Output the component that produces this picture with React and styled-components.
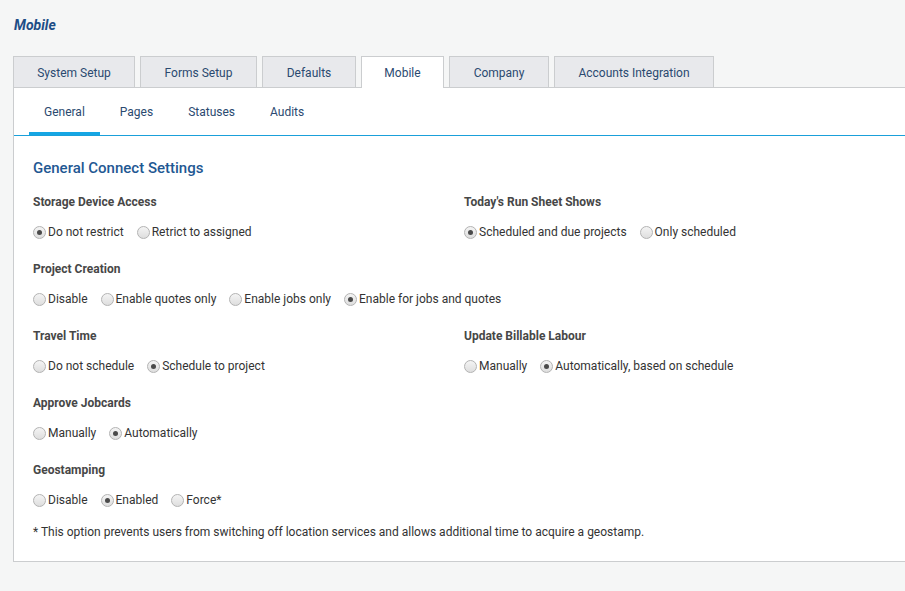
import styled, { createGlobalStyle } from "styled-components";

const Global = createGlobalStyle`
  html, body {
    margin: 0;
    padding: 0;
    background: #f5f6f6;
    font-family: Roboto, "Liberation Sans", sans-serif;
    overflow: hidden;
  }
`;

const Page = styled.div`
  width: 905px;
  height: 591px;
  padding-left: 13px;
  box-sizing: border-box;
`;

const Title = styled.h1`
  margin: 0;
  padding: 16px 0 0 1px;
  height: 40px;
  box-sizing: border-box;
  font-size: 14px;
  line-height: 18px;
  font-weight: 700;
  font-style: italic;
  color: #1d4d86;
`;

const TabBar = styled.div`
  display: flex;
  gap: 5px;
  margin-top: 16px;
  align-items: flex-end;
  height: 31px;
  position: relative;
  z-index: 1;
`;

const Tab = styled.div`
  box-sizing: border-box;
  height: ${(p) => (p.$active ? "32px" : "31px")};
  margin-bottom: ${(p) => (p.$active ? "-1px" : "0")};
  padding-top: 1px;
  width: ${(p) => p.$w}px;
  display: flex;
  align-items: center;
  justify-content: center;
  border: 1px solid #cbcdcf;
  border-bottom: none;
  background: ${(p) => (p.$active ? "#fff" : "#e8e9ec")};
  color: #2b4a70;
  font-size: 12px;
`;

const Panel = styled.div`
  background: #fff;
  border: 1px solid #cbcdcf;
  border-right: none;
  height: 475px;
  box-sizing: border-box;
`;

const SubBar = styled.div`
  display: flex;
  gap: 5px;
  padding-left: 15px;
  height: 48px;
  box-sizing: border-box;
  border-bottom: 1px solid #1aa0da;
`;

const SubTab = styled.div`
  padding: 3px 15px 0;
  display: flex;
  align-items: center;
  box-sizing: border-box;
  border-bottom: 3px solid ${(p) => (p.$active ? "#15a6e4" : "transparent")};
  color: #2b4a70;
  font-size: 12px;
`;

const Content = styled.div`
  padding: 22px 0 0 19px;
`;

const Heading = styled.h2`
  margin: 0 0 16px;
  font-size: 15px;
  line-height: 20px;
  font-weight: 500;
  color: #1f5893;
`;

const Grid = styled.div`
  display: grid;
  grid-template-columns: 431px 1fr;
  row-gap: 21px;
`;

const Field = styled.div`
  display: flex;
  flex-direction: column;
  gap: 14px;
  grid-column: ${(p) => (p.$wide ? "1 / -1" : "auto")};
`;

const Label = styled.div`
  font-size: 12px;
  line-height: 16px;
  font-weight: 700;
  color: #474747;
`;

const Options = styled.div`
  display: flex;
  gap: 13px;
  height: 16px;
  white-space: nowrap;
`;

const Option = styled.label`
  display: flex;
  align-items: center;
  gap: 2px;
  font-size: 12px;
  line-height: 16px;
  color: #333;
`;

const Radio = styled.span`
  width: 11px;
  height: 11px;
  border-radius: 50%;
  border: 1px solid #b3b3b3;
  background: linear-gradient(#f4f4f4, #dedede);
  display: flex;
  align-items: center;
  justify-content: center;
  margin-top: 1px;

  &::after {
    content: "";
    width: 5px;
    height: 5px;
    border-radius: 50%;
    background: ${(p) => (p.$checked ? "#4a4a4a" : "transparent")};
  }
`;

const Note = styled.p`
  margin: 16px 0 0;
  font-size: 12px;
  line-height: 16px;
  color: #333;
`;

const tabs = [
  ["System Setup", 122],
  ["Forms Setup", 117],
  ["Defaults", 94],
  ["Mobile", 83, true],
  ["Company", 100],
  ["Accounts Integration", 160],
];

// [label, options, checked index, spans both columns]
const fields = [
  ["Storage Device Access", ["Do not restrict", "Retrict to assigned"], 0],
  ["Today's Run Sheet Shows", ["Scheduled and due projects", "Only scheduled"], 0],
  ["Project Creation", ["Disable", "Enable quotes only", "Enable jobs only", "Enable for jobs and quotes"], 3, true],
  ["Travel Time", ["Do not schedule", "Schedule to project"], 1],
  ["Update Billable Labour", ["Manually", "Automatically, based on schedule"], 1],
  ["Approve Jobcards", ["Manually", "Automatically"], 1, true],
  ["Geostamping", ["Disable", "Enabled", "Force*"], 1, true],
];

export default function App() {
  return (
    <Page>
      <Global />
      <Title>Mobile</Title>
      <TabBar>
        {tabs.map(([name, w, active]) => (
          <Tab key={name} $w={w} $active={active}>
            {name}
          </Tab>
        ))}
      </TabBar>
      <Panel>
        <SubBar>
          <SubTab $active>General</SubTab>
          <SubTab>Pages</SubTab>
          <SubTab>Statuses</SubTab>
          <SubTab>Audits</SubTab>
        </SubBar>
        <Content>
          <Heading>General Connect Settings</Heading>
          <Grid>
            {fields.map(([label, opts, checked, wide]) => (
              <Field key={label} $wide={wide}>
                <Label>{label}</Label>
                <Options>
                  {opts.map((o, j) => (
                    <Option key={o}>
                      <Radio $checked={j === checked} />
                      {o}
                    </Option>
                  ))}
                </Options>
              </Field>
            ))}
          </Grid>
          <Note>
            * This option prevents users from switching off location services and allows additional time to acquire a geostamp.
          </Note>
        </Content>
      </Panel>
    </Page>
  );
}
